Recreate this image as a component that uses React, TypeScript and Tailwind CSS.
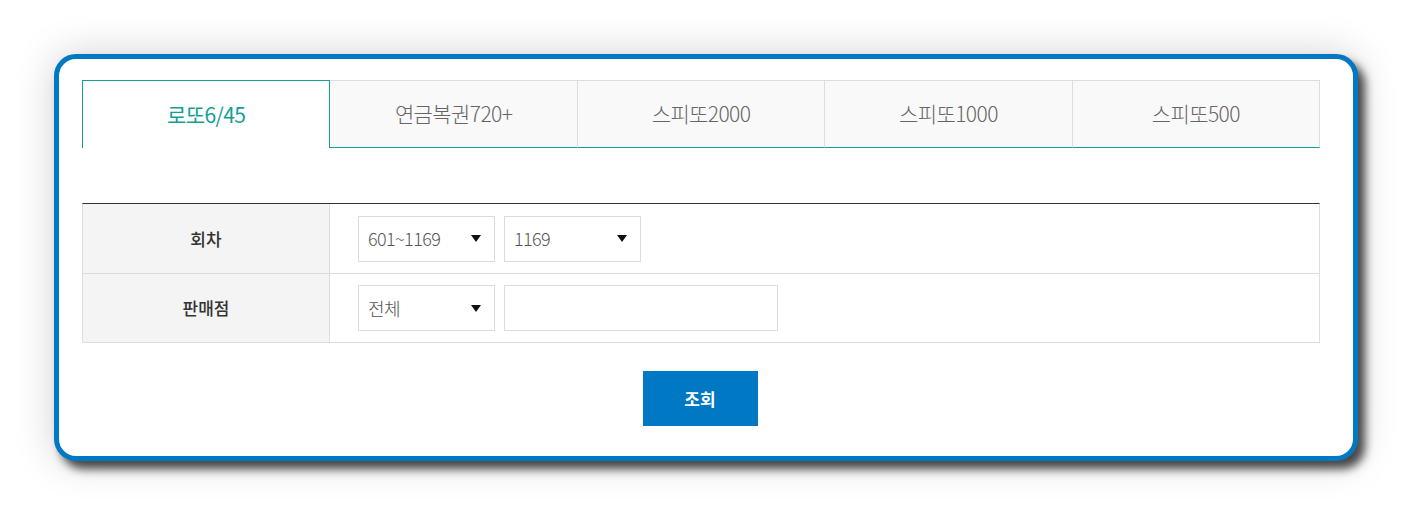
import React from 'react';

const tabs = ['로또6/45', '연금복권720+', '스피또2000', '스피또1000', '스피또500'];

const font = { fontFamily: '"Noto Sans CJK KR", "Noto Sans", sans-serif' };

function Caret() {
  return (
    <svg width="10" height="7" viewBox="0 0 10 7" className="shrink-0">
      <path d="M0 0 H10 L5 7 Z" fill="#111" />
    </svg>
  );
}

function SelectBox({ value }: { value: string }) {
  return (
    <div className="flex h-[46px] w-[137px] items-center justify-between border border-[#dcdcdc] bg-white pl-[9px] pr-[13px] text-[18px] font-light tracking-[-0.6px] text-[#555]">
      <span>{value}</span>
      <Caret />
    </div>
  );
}

export default function App() {
  const active = 0;

  return (
    <div className="min-h-[529px] bg-white pl-[54px] pt-[54px]" style={font}>
      <div className="h-[407px] w-[1304px] rounded-[22px] border-[5px] border-[#0078c4] bg-white pl-[23px] pt-[21px] shadow-[7px_8px_10px_rgba(0,0,0,0.7),0_0_40px_rgba(0,0,0,0.18)]">
        <div className="w-[1238px]">
          {/* tabs */}
          <div className="flex h-[68px]">
            {tabs.map((t, i) =>
              i === active ? (
                <div
                  key={t}
                  className="flex flex-1 items-center justify-center border-x border-t border-[#139f96] bg-white text-[21px] tracking-[-0.6px] text-[#139f96]"
                >
                  {t}
                </div>
              ) : (
                <div
                  key={t}
                  className="flex flex-1 items-center justify-center border-r border-t border-b border-r-[#dddddd] border-t-[#dddddd] border-b-[#139f96] bg-[#f9f9f9] text-[21px] font-light tracking-[-0.6px] text-[#666]"
                >
                  {t}
                </div>
              )
            )}
          </div>

          {/* search table */}
          <div className="mt-[55px] border-t border-[#333] border-x border-x-[#dddddd]">
            <div className="flex h-[70px] border-b border-[#dddddd]">
              <div className="flex w-[247px] items-center justify-center border-r border-[#dddddd] bg-[#f4f4f4] text-[17px] font-medium text-[#333]">
                회차
              </div>
              <div className="flex items-center gap-[9px] pl-[28px]">
                <SelectBox value="601~1169" />
                <SelectBox value="1169" />
              </div>
            </div>
            <div className="flex h-[69px] border-b border-[#dddddd]">
              <div className="flex w-[247px] items-center justify-center border-r border-[#dddddd] bg-[#f4f4f4] text-[17px] font-medium text-[#333]">
                판매점
              </div>
              <div className="flex items-center gap-[9px] pl-[28px]">
                <SelectBox value="전체" />
                <input
                  type="text"
                  className="h-[46px] w-[274px] border border-[#dcdcdc] bg-white px-[9px] text-[17px] text-[#555] outline-none"
                />
              </div>
            </div>
          </div>

          <div className="mt-[28px] flex justify-center pr-[2px]">
            <button className="h-[55px] w-[115px] bg-[#0078c4] text-[17px] font-bold text-white">
              조회
            </button>
          </div>
        </div>
      </div>
    </div>
  );
}
